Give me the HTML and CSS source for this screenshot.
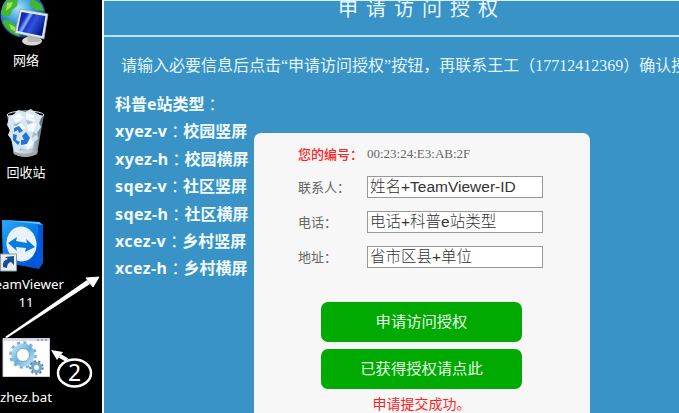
FILE: index.html
```html
<!DOCTYPE html>
<html lang="zh-CN">
<head>
<meta charset="utf-8">
<title>申请访问授权</title>
<link rel="stylesheet" href="styles.css">
</head>
<body>
<div class="screen">
  <aside class="desktop">
    <div class="shortcut network">
      <svg width="52" height="48" viewBox="0 0 52 48">
        <defs>
          <radialGradient id="globe" cx=".4" cy=".35" r=".65"><stop offset="0" stop-color="#a5e4fa"/><stop offset=".5" stop-color="#3398d8"/><stop offset="1" stop-color="#0b3d8c"/></radialGradient>
          <linearGradient id="display" x1="0" x2="1" y1="0" y2=".5"><stop offset="0" stop-color="#10209b"/><stop offset=".3" stop-color="#152fc0"/><stop offset=".42" stop-color="#8eb0f2"/><stop offset=".5" stop-color="#1a38c9"/><stop offset=".65" stop-color="#2e55dc"/><stop offset="1" stop-color="#071a8e"/></linearGradient>
        </defs>
        <circle cx="23" cy="15" r="22.500" fill="url(#globe)"/>
        <path d="M4 4Q10-3 18-1L17 6 12 10 10 16 4 17 1 13zM3 20l8 1 6 6 3 10Q8 33 3 23zM32-1l9 5 3 7-8-1-7-5z" fill="#43b72f"/>
        <path d="M7 3l6-1-2 5-5 4zM9 24l6 3 1 5-5-3z" fill="#a3e254"/>
        <ellipse cx="32" cy="41" rx="10" ry="4.500" fill="#d9d9ce"/>
        <path d="M27 34l12 3 2 5H28z" fill="#b5b7b4"/>
        <path d="M20 9l28 5-4 25-29-6z" fill="#e0e7ef" stroke="#8e9bb0" stroke-width=".7"/>
        <path d="M21.500 12l24 4-3.500 20-24.500-5z" fill="url(#display)"/>
      </svg>
      <span>网络</span>
    </div>
    <div class="shortcut recycle">
      <svg width="42" height="50" viewBox="0 0 42 50">
        <defs><linearGradient id="bin"><stop offset="0" stop-color="#75808b"/><stop offset=".2" stop-color="#dbe8f2"/><stop offset=".65" stop-color="#b7cddd"/><stop offset="1" stop-color="#58636e"/></linearGradient></defs>
        <path d="M2 6l7 39q11 6 23 0l7-39z" fill="url(#bin)"/>
        <path d="M4 8l5-3 4-4 7 2 6-3 5 4 6 3-3 7 2 4-4 6 1 6-4 3-1 6-7 2-7 1-5-3-3-9-3-4 2-5-3-5z" fill="#d5e5f1"/>
        <path d="M7 8l7-4 5 5-8 5zM21 4l8 2 1 7-9-3zM9 18l7-4 5 5-7 3zM22 15l10-1-4 9-5-1zM17 33l8-4 4 5-6 6z" fill="#f8fcff"/>
        <path d="M8 15l8-2-5 5zM28 23l5 2-6 4zM21 11l7 2-5 3zM15 39l7 2-8 1z" fill="#a9c0d0"/>
        <ellipse cx="20.500" cy="6" rx="18.500" ry="4" fill="none" stroke="#e4ebef"/>
        <path d="M9 19l5-2 4 5-4 2-1-3-4 2zM8 25l4 1-1 5 4 2-2 3-5-5zM17 27l4-4 4 6-3 6-6 1v-5h3z" fill="#2675d4"/>
        <path d="M8 42q12 6 25-1l-1 4q-11 6-23 0z" fill="#aaa5a1"/>
      </svg>
      <span>回收站</span>
    </div>
    <div class="shortcut teamviewer">
      <svg width="52" height="54" viewBox="0 0 52 54">
        <defs><linearGradient id="tv" x2=".7" y2="1"><stop stop-color="#2daafa"/><stop offset=".55" stop-color="#087de9"/><stop offset="1" stop-color="#0057d5"/></linearGradient></defs>
        <path d="M2 1l37 2 4 3v38l-4 6-36-7z" fill="#0059d8"/>
        <path d="M2 1l36 3v45L3 43z" fill="url(#tv)"/>
        <path d="M2 1l37 2 4 3-5-1z" fill="#4bd0ff"/>
        <ellipse cx="21.500" cy="25" rx="15" ry="17.500" fill="#e8f2fc" transform="rotate(-8 21.500 25)"/>
        <path d="M8 24l9-6-1 4 11 2-1-4 9 8-10 5 1-4-10-1 1 4z" fill="#087bdc"/>
        <path d="M.5 35h16v17H.5z" fill="#e9edf2" stroke="#8d98a4"/>
        <path d="M3 48q-1-7 5-8l-3-2 9-1v9l-3-3q-4 1-4 6z" fill="#174f91"/>
      </svg>
      <span class="tv-label">TeamViewer<br>11</span>
    </div>
    <div class="shortcut batch">
      <svg width="48" height="39" viewBox="0 0 48 39">
        <defs><linearGradient id="gear" x2="1" y2="1"><stop stop-color="#b9e6fa"/><stop offset=".5" stop-color="#6ab0dc"/><stop offset="1" stop-color="#b5e3f5"/></linearGradient></defs>
        <path d="M1 .5h46.500v38H1z" fill="#fff" stroke="#cfcfe1"/>
        <path d="M1 1h46v2H1z" fill="#d9d9ea"/><path d="M35 2h2m2 0h2m2 0h2" stroke="#666688"/>
        <circle cx="21" cy="17" r="12.300" fill="none" stroke="#79b1d3" stroke-width="3" stroke-dasharray="3.220 3.220"/>
        <circle cx="21" cy="17" r="9" fill="none" stroke="url(#gear)" stroke-width="5"/>
        <circle cx="21" cy="17" r="6.500" fill="#fff" stroke="#79a5c3"/>
        <circle cx="34.500" cy="29.500" r="6" fill="none" stroke="#557fac" stroke-width="2.500" stroke-dasharray="2.090 2.090"/>
        <circle cx="34.500" cy="29.500" r="4" fill="#fff" stroke="#76a7cd" stroke-width="3"/>
      </svg>
      <span class="bat-label">zhez.bat</span>
    </div>
    <svg class="annotations" width="104" height="413" viewBox="0 0 104 413">
      <path d="M5 337L87 280 90 284 7 338z" fill="#fff"/>
      <path d="M99 277l-6 10-7-9z" fill="#fff" stroke="#fff"/>
      <path d="M67 360l-7-4" stroke="#fff" stroke-width="4"/><path d="M51 350l12 2-6 8z" fill="#fff"/>
      <ellipse cx="74.500" cy="373" rx="16.500" ry="13.500" fill="#000" stroke="#fff" stroke-width="2.500"/>
      <text x="74.500" y="380.500" class="step">2</text>
    </svg>
  </aside>
  <main class="page">
    <header><h1>申请访问授权</h1></header>
    <p class="notice">请输入必要信息后点击“申请访问授权”按钮，再联系王工（17712412369）确认授权</p>
    <div class="content">
      <ul class="types">
        <li><b>科普e站类型</b><i>：</i></li>
        <li><b class="code">xyez-v</b><i>：</i><b>校园竖屏</b></li>
        <li><b class="code">xyez-h</b><i>：</i><b>校园横屏</b></li>
        <li><b class="code">sqez-v</b><i>：</i><b>社区竖屏</b></li>
        <li><b class="code">sqez-h</b><i>：</i><b>社区横屏</b></li>
        <li><b class="code">xcez-v</b><i>：</i><b>乡村竖屏</b></li>
        <li><b class="code">xcez-h</b><i>：</i><b>乡村横屏</b></li>
      </ul>
      <form class="card">
        <div class="row number"><label>您的编号：</label><span>00:23:24:E3:AB:2F</span></div>
        <div class="row"><label>联系人：</label><div class="field">姓名+TeamViewer-ID</div></div>
        <div class="row"><label>电话：</label><div class="field">电话+科普e站类型</div></div>
        <div class="row"><label>地址：</label><div class="field">省市区县+单位</div></div>
        <div class="actions">
          <button type="button">申请访问授权</button>
          <button type="button">已获得授权请点此</button>
        </div>
        <p class="result">申请提交成功。</p>
      </form>
    </div>
  </main>
</div>
</body>
</html>
```
FILE: styles.css
```css
* { box-sizing: border-box; }
body { margin: 0; overflow: hidden; }
.screen { display: flex; width: 679px; height: 413px; overflow: hidden; background: #000; }
.desktop { position: relative; flex: 0 0 104px; height: 413px; overflow: hidden; border-right: 2px solid #f2fafa; background: #000; color: #fff; font-family: "Noto Sans", "Noto Sans CJK SC", sans-serif; font-size: 13px; line-height: 18px; }
.shortcut { display: flex; flex-direction: column; align-items: center; width: 52px; }
.shortcut svg { display: block; flex: none; }
.shortcut span { white-space: nowrap; text-align: center; }
.network { height: 109px; }
.network span { margin-top: 3px; }
.recycle { height: 110px; }
.recycle span { margin-top: 4px; }
.teamviewer { height: 119px; }
.tv-label { margin-top: 2px; font-size: 13.300px; }
.batch span { margin-top: 11px; font-size: 13.300px; }
.annotations { position: absolute; left: 0; top: 0; }
.step { fill: #fff; font: 23px "Noto Sans", sans-serif; text-anchor: middle; }

.page { flex: 1; min-width: 0; overflow: hidden; border-top: 1px solid #d5f3fa; background: #3993c6; font-family: "Liberation Serif", "Noto Sans CJK SC", sans-serif; }
header { height: 36px; overflow: hidden; border-bottom: 2px solid #b9e3f7; }
h1 { margin: -8px 0 0 234px; color: #e9f8ff; font-size: 20px; font-weight: 400; line-height: 32px; letter-spacing: 8px; white-space: nowrap; }
.notice { margin: 17px 0 0 17px; color: #e2f5ff; font-size: 16px; font-weight: 400; line-height: 24px; white-space: nowrap; }
.content { display: flex; align-items: flex-start; }
.types { width: 150px; margin: 13px 0 0; padding: 0 0 0 11px; list-style: none; color: #f2fbff; font-family: "Noto Sans", "Noto Sans CJK SC", sans-serif; font-size: 16px; line-height: 27.400px; white-space: nowrap; }
.types li { display: flex; height: 27.400px; }
.types b { font-weight: 700; }
.types .code { letter-spacing: .4px; }
.types i { font-family: "Noto Sans CJK TC", sans-serif; font-style: normal; }
.card { width: 336px; height: 300px; margin-top: 55px; padding: 7px 0 0 44px; border-radius: 7px; background: #f7f7f7; }
.row { display: flex; align-items: center; height: 35px; color: #666; font-size: 13px; }
.row label { width: 69px; white-space: nowrap; }
.number { height: 26px; margin-bottom: 3px; }
.number label { color: #f22; font-weight: 500; }
.number span { margin-top: 2px; font-size: 13px; }
.field { width: 176px; height: 22px; padding-left: 2px; border: 1px solid #999; background: #fff; color: #333; font-family: "Liberation Sans", "Noto Sans CJK SC", sans-serif; font-size: 15.500px; font-weight: 300; line-height: 19px; white-space: nowrap; }
.actions { display: flex; flex-direction: column; gap: 7px; width: 201px; margin: 28px 0 0 23px; }
button { height: 40px; padding: 0; border: 0; border-radius: 7px; background: #0a0; color: #e9ffe9; font-family: "Liberation Serif", "Noto Sans CJK SC", sans-serif; font-size: 15.300px; font-weight: 400; line-height: 38px; }
.result { width: 201px; margin: 5px 0 0 23px; color: #f22; font-size: 14px; line-height: 22px; text-align: center; }
```
